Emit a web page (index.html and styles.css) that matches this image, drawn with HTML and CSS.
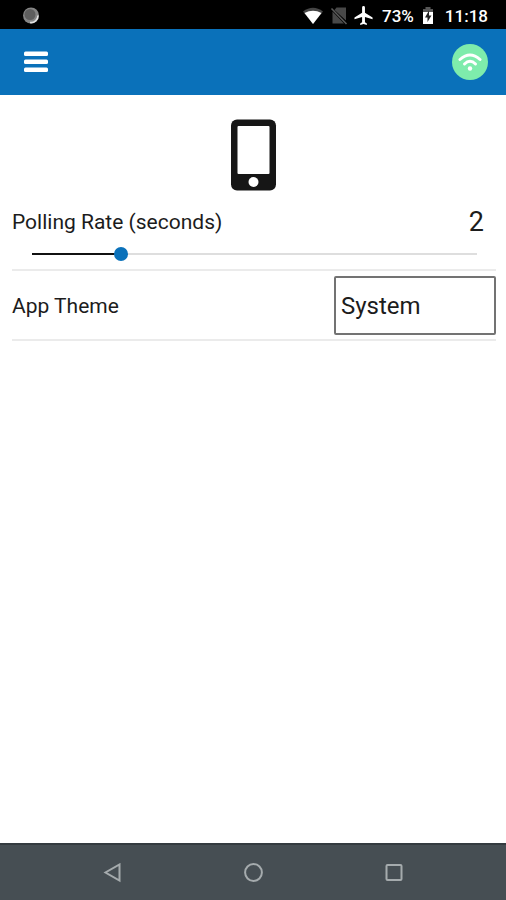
FILE: index.html
```html
<!DOCTYPE html>
<html lang="en">
<head>
<meta charset="utf-8">
<meta name="viewport" content="width=device-width, initial-scale=1">
<title>Settings</title>
<link rel="stylesheet" href="styles.css">
</head>
<body>
<div class="screen">
  <div class="status-bar">
    <svg class="notification" width="18" height="18" viewBox="0 0 18 18" aria-hidden="true">
      <circle cx="9" cy="8.500" r="8" fill="#858585"/>
      <circle cx="8" cy="7.500" r="5.5" fill="#5e5e5e"/>
      <path d="M16 8.500a7 7 0 0 1-8 7" fill="none" stroke="#e2e2e2" stroke-width="1.6"/>
    </svg>
    <div class="status-icons">
      <svg width="22" height="18" viewBox="0 0 22 18" aria-hidden="true">
        <path d="M11 17 1 4.500Q11-3 21 4.500z" fill="#454545"/>
        <path d="M11 17 2.500 6Q11 1.500 19.500 6z" fill="#fff"/>
      </svg>
      <svg width="18" height="18" viewBox="0 0 18 18" aria-hidden="true">
        <path d="M6.500 0.500H16v13L4.500 3zM2.500 4.500 14 16.500H2.500z" fill="#484848"/>
        <path d="m1.500 1.500 15 15.500" stroke="#5a5a5a" stroke-width="1.600"/>
      </svg>
      <svg width="20" height="20" viewBox="2 2 20 21" aria-hidden="true">
        <path d="M21 16v-2l-8-5V3.500a1.500 1.500 0 0 0-3 0V9l-8 5v2l8-2.500V19l-2 1.500V22l3.500-1 3.500 1v-1.500L13 19v-5.500z" fill="#fff"/>
      </svg>
    </div>
    <span class="battery-level">73%</span>
    <svg class="battery" width="12" height="18" viewBox="0 0 12 18" aria-hidden="true">
      <path d="M3.500 0h5v2H11v4H1V2h2.500z" fill="#565656"/>
      <path d="M1 5h10v12H1z" fill="#fff"/>
      <path d="M7 3.500 3 10.500h2.500V15L9.500 8.500H7z" fill="#222"/>
    </svg>
    <time class="clock">11:18</time>
  </div>

  <header class="app-bar">
    <button class="icon-button" type="button" aria-label="Menu">
      <svg width="24" height="22" viewBox="0 0 24 22" aria-hidden="true">
        <g fill="#fff"><rect y="0.500" width="24" height="4.500" rx="1.500"/><rect y="8.500" width="24" height="4.500" rx="1.500"/><rect y="16.500" width="24" height="4.500" rx="1.500"/></g>
      </svg>
    </button>
    <button class="icon-button connection" type="button" aria-label="Connected">
      <svg width="24" height="20" viewBox="0 0 24 20" aria-hidden="true">
        <g fill="none" stroke="#fff" stroke-width="3" stroke-linecap="round"><path d="M2 7.500Q12-1.500 22 7.500"/><path d="M6.500 12Q12 6.500 17.500 12"/></g>
        <circle cx="12" cy="16.500" r="2.200" fill="#fff"/>
      </svg>
    </button>
  </header>

  <main class="settings">
    <svg class="device" width="46" height="72" viewBox="0 0 46 72" aria-hidden="true">
      <rect x="0" y="0.500" width="45" height="71" rx="6" fill="#161616"/>
      <rect x="6.500" y="7" width="32" height="48" rx="1" fill="#fff"/>
      <circle cx="22.500" cy="63" r="5" fill="#fff"/>
    </svg>

    <section class="setting polling">
      <div class="row">
        <label for="rate">Polling Rate (seconds)</label>
        <output class="rate-value" for="rate">2</output>
      </div>
      <input class="slider" id="rate" type="range" min="0" max="10" value="2">
    </section>

    <section class="setting row theme">
      <label for="theme">App Theme</label>
      <select class="picker" id="theme">
        <option>System</option>
      </select>
    </section>
  </main>

  <nav class="nav-bar" aria-label="System">
    <button type="button" aria-label="Back">
      <svg width="20" height="20" viewBox="0 0 20 20" aria-hidden="true"><path d="M17.500 1.500v16L3.500 9.500z"/></svg>
    </button>
    <button type="button" aria-label="Home">
      <svg width="20" height="20" viewBox="0 0 20 20" aria-hidden="true"><circle cx="10.500" cy="9.500" r="8.400"/></svg>
    </button>
    <button type="button" aria-label="Recent apps">
      <svg width="20" height="20" viewBox="0 0 20 20" aria-hidden="true"><rect x="2.500" y="2" width="15" height="15" rx="1"/></svg>
    </button>
  </nav>
</div>
</body>
</html>
```
FILE: styles.css
```css
* {
  box-sizing: border-box;
}

body {
  margin: 0;
  background: #fff;
  color: #1c1c1c;
  font-family: Roboto, sans-serif;
  font-size: 21px;
}

button {
  padding: 0;
  border: 0;
  background: none;
}

svg {
  display: block;
}

.screen {
  display: flex;
  flex-direction: column;
  min-height: 100vh;
}

.status-bar {
  display: flex;
  align-items: center;
  padding: 2px 18px 0 22px;
  height: 29px;
  background: #000;
  color: #fff;
  font-size: 17px;
  font-weight: 500;
  line-height: 24px;
}

.status-icons {
  display: flex;
  align-items: center;
  gap: 6px;
  margin-left: auto;
}

.battery-level,
.battery {
  margin-left: 8px;
}

.clock {
  margin-left: 11px;
}

.app-bar {
  display: flex;
  align-items: center;
  justify-content: space-between;
  padding: 0 18px;
  height: 66px;
  background: #0a71ba;
}

.icon-button {
  display: grid;
  place-items: center;
  width: 36px;
  height: 36px;
}

.connection {
  border-radius: 50%;
  background: #7eecac;
}

.settings {
  flex: 1;
  padding: 24px 10px 0 12px;
}

.device {
  margin: 0 auto 12px;
}

.setting {
  border-bottom: 2px solid #ebebeb;
}

.row {
  display: flex;
  align-items: center;
  justify-content: space-between;
}

.polling .row {
  height: 38px;
}

.rate-value {
  padding-right: 12px;
  font-size: 27px;
}

.slider {
  display: block;
  appearance: none;
  width: calc(100% - 25px);
  height: 14px;
  margin: 6px 12px 8px 13px;
  background: linear-gradient(to right, #111 20%, #dedede 20%) center / calc(100% - 14px) 2px no-repeat;
}

.slider::-webkit-slider-thumb {
  appearance: none;
  width: 14px;
  height: 14px;
  border-radius: 50%;
  background: #0a71ba;
}

.theme {
  padding: 5px 0 4px;
}

.picker {
  appearance: none;
  width: 162px;
  height: 59px;
  padding: 0 5px;
  border: 2px solid #737373;
  border-radius: 2px;
  background: #fff;
  color: inherit;
  font-family: inherit;
  font-size: 24px;
}

.nav-bar {
  display: grid;
  grid-template-columns: repeat(3, 1fr);
  padding: 0 42px;
  height: 57px;
  border-top: 2px solid #343b40;
  background: #464e53;
}

.nav-bar button {
  display: grid;
  place-items: center;
}

.nav-bar svg {
  fill: none;
  stroke: #a5abad;
  stroke-width: 2;
}
```
